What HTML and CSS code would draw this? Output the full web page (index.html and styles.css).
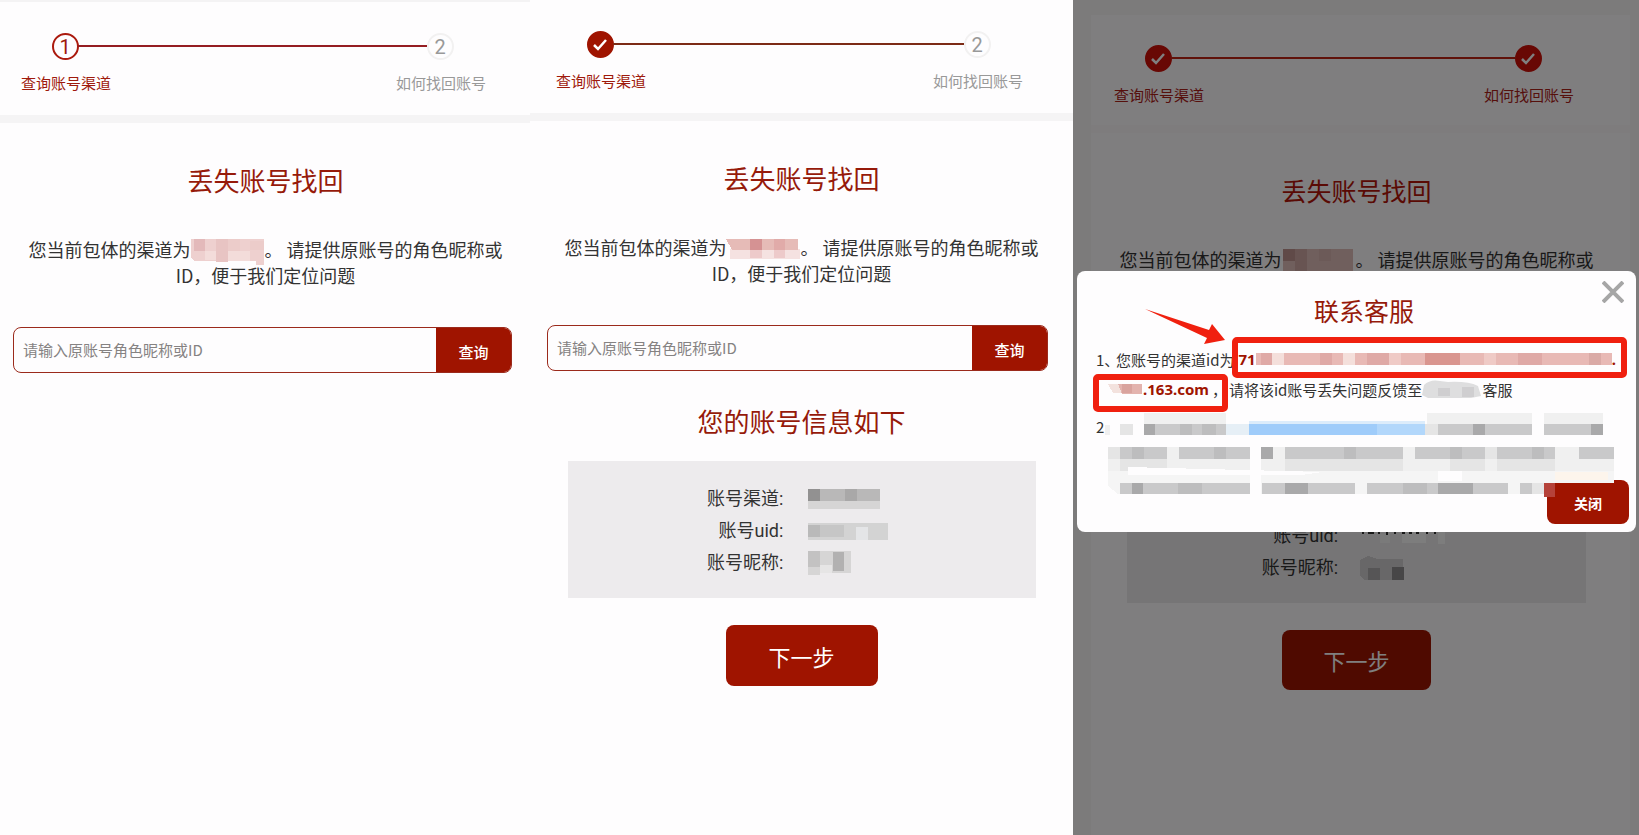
FILE: index.html
```html
<!DOCTYPE html>
<html lang="zh-CN">
<head>
  <meta charset="UTF-8">
  <meta name="viewport" content="width=device-width, initial-scale=1.0">
  <title>丢失账号找回</title>
  <link rel="stylesheet" href="styles.css">
</head>
<body>
<div class="flow">

  <!-- Step 1: ask for the account -->
  <section class="panel panel-query">
    <header class="steps">
      <div class="step active">
        <span class="dot">1</span>
        <span class="step-label">查询账号渠道</span>
      </div>
      <div class="line"></div>
      <div class="step">
        <span class="dot">2</span>
        <span class="step-label">如何找回账号</span>
      </div>
    </header>
    <div class="content">
      <h1 class="title">丢失账号找回</h1>
      <p class="intro">您当前包体的渠道为<svg class="mask" width="74" height="26" viewBox="0 0 74 26" shape-rendering="crispEdges"><path fill="#eed0cf" d="M1 0h73v26h-8v-4H4l-3-3z"/><path fill="#e3b9ba" d="M4 0h11v12H4z"/><path fill="#e8c4c3" d="M26 0h12v23H26z"/><path fill="#ecccca" d="M38 0h12v12H38zM60 2h14v9H60z"/><path fill="#f3dcda" d="M15 12h11v9H15zM38 12h22v10H38z"/></svg>。 请提供原账号的角色昵称或<br>ID，便于我们定位问题</p>
      <form class="search">
        <input type="text" placeholder="请输入原账号角色昵称或ID" aria-label="原账号角色昵称或ID">
        <button type="button">查询</button>
      </form>
    </div>
  </section>

  <!-- Step 1 done: account info found -->
  <section class="panel panel-result">
    <header class="steps">
      <div class="step done">
        <span class="dot"><svg width="16" height="14" viewBox="0 0 16 14"><path d="M2 7l4 4 8-9" fill="none" stroke="#fff" stroke-width="2.5"/></svg></span>
        <span class="step-label">查询账号渠道</span>
      </div>
      <div class="line"></div>
      <div class="step">
        <span class="dot">2</span>
        <span class="step-label">如何找回账号</span>
      </div>
    </header>
    <div class="content">
      <h1 class="title">丢失账号找回</h1>
      <p class="intro">您当前包体的渠道为<svg class="mask" width="74" height="26" viewBox="0 0 74 26" shape-rendering="crispEdges"><path fill="#f5e2e1" d="M4 12h70v10H4z"/><path fill="#e6bbb7" d="M0 2h72v11H6z"/><path fill="#d59293" d="M24 2h12v11H24z"/><path fill="#e1aba9" d="M48 2h11v11H48z"/><path fill="#edcaca" d="M24 13h12v8H24zM48 13h11v8H48z"/></svg>。 请提供原账号的角色昵称或<br>ID，便于我们定位问题</p>
      <form class="search">
        <input type="text" placeholder="请输入原账号角色昵称或ID" aria-label="原账号角色昵称或ID">
        <button type="button">查询</button>
      </form>
      <h2 class="title result-title">您的账号信息如下</h2>
      <dl class="info">
        <dt>账号渠道:</dt>
        <dd><svg width="74" height="22" viewBox="0 0 74 22" shape-rendering="crispEdges"><path fill="#d6d5d5" d="M0 12h72v9H0z"/><path fill="#b9b8b8" d="M0 1h72v12H0z"/><path fill="#929191" d="M0 1h12v12H0z"/><path fill="#a9a8a8" d="M37 1h12v12H37z"/></svg></dd>
        <dt>账号uid:</dt>
        <dd><svg width="80" height="18" viewBox="0 0 80 18" shape-rendering="crispEdges"><path fill="#d3d3d3" d="M0 1h80v17H0z"/><path fill="#b9b9b9" d="M0 3h12v12H0z"/><path fill="#c6c6c6" d="M12 3h24v12H12z"/><path fill="#e4e5e7" d="M48 5h12v13H48z"/></svg></dd>
        <dt>账号昵称:</dt>
        <dd><svg width="44" height="24" viewBox="0 0 44 24" shape-rendering="crispEdges"><path fill="#d6d5d5" d="M0 0h43v22H12v2H0z"/><path fill="#c3c2c2" d="M0 0h12v16H0z"/><path fill="#b2b1b1" d="M25 1h11v19H25z"/><path fill="#e6e5e5" d="M12 14h12v8H12z"/></svg></dd>
      </dl>
      <button type="button" class="next">下一步</button>
    </div>
  </section>

  <!-- Step 2: contact dialog -->
  <section class="panel panel-contact">
    <div class="card">
      <header class="steps">
        <div class="step done">
          <span class="dot"><svg width="16" height="14" viewBox="0 0 16 14"><path d="M2 7l4 4 8-9" fill="none" stroke="#fff" stroke-width="2.5"/></svg></span>
          <span class="step-label">查询账号渠道</span>
        </div>
        <div class="line"></div>
        <div class="step done">
          <span class="dot"><svg width="16" height="14" viewBox="0 0 16 14"><path d="M2 7l4 4 8-9" fill="none" stroke="#fff" stroke-width="2.5"/></svg></span>
          <span class="step-label">如何找回账号</span>
        </div>
      </header>
      <div class="content">
        <h1 class="title">丢失账号找回</h1>
        <p class="intro">您当前包体的渠道为<svg class="mask" width="74" height="26" viewBox="0 0 74 26" shape-rendering="crispEdges"><path fill="#e0bfbb" d="M2 0h70v26H2z"/><path fill="#c09490" d="M2 0h12v12H2z"/><path fill="#d0a8a4" d="M14 0h12v24H14z"/><path fill="#d8b5b1" d="M38 0h12v12H38z"/></svg>。 请提供原账号的角色昵称或<br>ID，便于我们定位问题</p>
        <form class="search">
          <input type="text" placeholder="请输入原账号角色昵称或ID" aria-label="原账号角色昵称或ID">
          <button type="button">查询</button>
        </form>
        <h2 class="title result-title">您的账号信息如下</h2>
        <dl class="info">
          <dt>账号渠道:</dt>
          <dd></dd>
          <dt>账号uid:</dt>
          <dd><svg width="86" height="20" viewBox="0 0 86 20" shape-rendering="crispEdges"><path fill="#fafafa" d="M42 6h24v11H42zM78 6h7v12h-7z"/><path fill="#f4f4f4" d="M20 8h10v9H20z"/><path fill="#333" d="M2 5h2v3H2zM8 6h6v2H8zM18 5h2v3h-2zM26 5h2v4h-2zM34 5h2v3h-2zM42 6h3v2h-3zM49 6h3v2h-3zM56 6h3v2h-3zM66 5h2v3h-2zM74 5h2v3h-2z"/></svg></dd>
          <dt>账号昵称:</dt>
          <dd><svg width="44" height="24" viewBox="0 0 44 24" shape-rendering="crispEdges"><path fill="#d0cfd0" d="M0 4l8-4 10 3h25v21H4l-4-4z"/><path fill="#acabac" d="M8 12h12v12H8z"/><path fill="#8e8c8f" d="M32 11h12v13H32z"/></svg></dd>
        </dl>
        <button type="button" class="next">下一步</button>
      </div>
    </div>
    <div class="overlay"></div>

    <div class="modal" role="dialog" aria-labelledby="modal-title">
      <h2 class="title" id="modal-title">联系客服</h2>
      <button type="button" class="modal-x" aria-label="关闭窗口">
        <svg width="22" height="22" viewBox="0 0 22 22"><path d="M1 1l20 20M21 1L1 21" stroke="#a6a6a6" stroke-width="4"/></svg>
      </button>
      <svg class="arrow" width="80" height="35" viewBox="0 0 80 35"><path fill="#f0200f" d="M0 0L64 21 67 15 80 31 59 35 62 29z"/></svg>
      <div class="tips">
        <div class="row">
          <span class="num">1、</span>
          <span>您账号的渠道id为</span>
          <strong class="callout channel-id">71<svg height="14" viewBox="0 0 356 14" preserveAspectRatio="none" shape-rendering="crispEdges"><path fill="#e8b9b5" d="M0 1h356v12H0z"/><path fill="#f4dfdb" d="M16 1h12v12H16zM87 1h12v12H87z"/><path fill="#dfa9a6" d="M5 1h11v12H5zM64 1h12v12H64zM111 1h22v12h-22zM262 1h24v12h-24z"/><path fill="#d9958f" d="M169 1h35v12h-35z"/><path fill="#efcac6" d="M228 1h12v12h-12zM133 1h12v12h-12z"/><path fill="#daaaa6" d="M333 1h12v12h-12z"/></svg>.</strong>
        </div>
        <div class="row row-cont">
          <strong class="callout"><svg width="35" height="12" viewBox="0 0 35 12" shape-rendering="crispEdges"><path fill="#f3e2de" d="M0 1h14v9H5z"/><path fill="#e3b3ae" d="M10 1h24v10H14z"/><path fill="#d9a39e" d="M14 1h10v9H14z"/></svg>.163.com<i>，</i></strong>
          <span>请将该id账号丢失问题反馈至</span>
          <svg width="60" height="20" viewBox="0 0 60 20"><path fill="#dededf" d="M2 6Q8 0 18 2l8 1q20-1 30 4l3 10-10 2H6L0 16z"/><path fill="#cfced0" d="M16 9h12v8H16zM40 8h12v10H40z"/></svg>
          <span>客服</span>
        </div>
        <div class="row row-second">
          <span class="num-2">2</span>
          <svg class="block-mask" height="82" viewBox="0 0 518 82" preserveAspectRatio="none" shape-rendering="crispEdges">
            <path fill="#f0f0f0" d="M40 0h82v11H40zM323 0h105v11H323zM440 0h59v11h-59zM1 12h5v10H1zM4 34h506v24H4z"/>
            <path fill="#f5f5f5" d="M4 58h506v12H4zM4 70h436v11H14L4 73z"/>
            <path fill="#e5e5e5" d="M16 11h13v11H16zM321 11h13v11h-13zM4 34h12v12H4zM381 34h12v12h-12zM428 70h12v11h-12zM16 46h47v12H16zM181 46h118v12H181zM346 46h35v12h-35zM393 46h58v12h-58z"/>
            <path fill="#e6eff6" d="M122 11h23v11h-23z"/>
            <path fill="#9fccfa" d="M145 11h128v11H145z"/>
            <path fill="#b2d7fb" d="M273 11h48v11h-48z"/>
            <path fill="#dcecfb" d="M145 8h176v3H145z"/>
            <path fill="#c9c9ca" d="M51 11h71v11H51zM334 11h94v11h-94zM440 11h47v11h-47zM16 34h47v12H16zM75 34h71v12H75zM181 34h118v12H181zM311 34h70v12h-70zM393 34h58v12h-58zM475 34h35v12h-35zM16 70h130v11H16zM158 70h93v11h-93zM263 70h141v11H263zM416 70h12v11h-12z"/>
            <path fill="#bdbdbe" d="M76 11h12v11H76zM98 11h14v11H98zM28 34h12v12H28zM110 34h12v12h-12zM240 34h12v12h-12zM346 34h12v12h-12zM428 34h12v12h-12zM74 70h24v11H74zM299 70h24v11h-24z"/>
            <path fill="#a9a9aa" d="M40 11h11v11H40zM369 11h12v11h-12zM487 11h12v11h-12zM157 34h12v12h-12zM28 70h11v11H28zM181 70h23v11h-23zM334 70h35v11h-35z"/>
            <path fill="#fefdfe" d="M122 11zM146 34h11v48h-11zM24 54l194 5-20 3H24zM334 58h24v10h-24z"/>
            <path fill="#fdf5ec" d="M451 59h53v8h-53z"/>
            <path fill="#b5423a" d="M440 70h11v14h-11z"/>
          </svg>
        </div>
      </div>
      <button type="button" class="modal-close">关闭</button>
    </div>
  </section>

</div>
</body>
</html>
```
FILE: styles.css
```css
* {
  box-sizing: border-box;
}
body {
  margin: 0;
  font-family: "Noto Sans CJK SC", "Noto Sans", sans-serif;
  color: #333;
  background: #fefdfe;
}
button, input {
  font-family: inherit;
}
.flow {
  display: grid;
  grid-template-columns: 530fr 543fr 566fr;
  min-height: 100vh;
}
.panel {
  position: relative;
}

/* steps */
.steps {
  display: flex;
  align-items: flex-start;
  border-bottom: 8px solid #f5f4f5;
}
.panel-query .steps {
  border-top: 2px solid #f4f3f4;
  padding: 31px 44px 22px 21px;
}
.panel-result .steps {
  padding: 31px 50px 22px 26px;
}
.step {
  display: flex;
  flex-direction: column;
  align-items: center;
  width: 90px;
  gap: 13px;
  color: #999;
}
.dot {
  display: flex;
  align-items: center;
  justify-content: center;
  width: 27px;
  height: 27px;
  margin-right: 2px;
  border: 2px solid #f2f1f1;
  border-radius: 50%;
  font-family: Roboto, "Liberation Sans", sans-serif;
  font-size: 20px;
  line-height: 24px;
}
.step-label {
  font-size: 15px;
  line-height: 20px;
  white-space: nowrap;
}
.step.active, .step.done {
  color: #9f1a0c;
}
.step.active .dot {
  border-color: #ab1a0e;
}
.step.done .dot {
  background: #9f1400;
  border-color: #9f1400;
}
.line {
  flex: 1;
  height: 2px;
  margin: 12px -31px 0 -33px;
  background: #951d22;
}
.panel-result .line {
  background: #7c2b16;
}

/* page content */
.content {
  display: flex;
  flex-direction: column;
}
.panel-query .content {
  padding: 0 18px 0 13px;
}
.panel-result .content {
  padding: 0 25px 0 17px;
}
.title {
  margin: 39px 0 0;
  font-size: 26px;
  font-weight: 400;
  line-height: 36px;
  text-align: center;
  color: #961a0a;
}
.intro {
  margin: 38px -10px 0;
  font-size: 18px;
  line-height: 26px;
  text-align: center;
}
.panel-query .title, .panel-query .intro {
  padding-left: 6px;
}
.panel-result .title, .panel-result .intro {
  padding-left: 8px;
}
.mask {
  height: 26px;
  vertical-align: middle;
  margin: -4px 0;
}
.search {
  display: flex;
  margin-top: 39px;
  height: 46px;
  border: 1px solid #9b2a1c;
  border-radius: 8px;
  overflow: hidden;
}
.search input {
  flex: 1;
  min-width: 0;
  padding: 0 9px 2px;
  border: 0;
  background: transparent;
  font-size: 15px;
  color: #333;
}
.search input::placeholder {
  color: #858282;
}
.search button {
  width: 75px;
  padding: 2px 0 0;
  border: 0;
  background: #9f1400;
  color: #fff;
  font-size: 15px;
  font-weight: 500;
}
.result-title {
  margin-top: 32px;
}
.info {
  display: grid;
  grid-template-columns: 46% 1fr;
  column-gap: 25px;
  grid-auto-rows: 32px;
  align-items: center;
  margin: 22px 12px 0 21px;
  padding: 22px 0 19px;
  background: #edebed;
  font-family: Roboto, "Noto Sans CJK SC", sans-serif;
  font-size: 18px;
  line-height: 32px;
}
.info dt {
  text-align: right;
}
.info dd {
  display: flex;
  margin: 0;
}
.next {
  align-self: center;
  width: 152px;
  height: 61px;
  margin: 27px 0 0 8px;
  border: 0;
  border-radius: 8px;
  background: #9f1400;
  color: #fff;
  font-size: 22px;
}

/* dimmed page behind the dialog */
.panel-contact {
  padding: 15px 9px 0 18px;
  background: #f8f7f7;
}
.card {
  min-height: 100%;
  padding-right: 8px;
  background: #fffcfe;
}
.panel-contact .steps {
  margin-right: -8px;
  padding: 30px 56px 20px 23px;
  border-color: #fcf9fb;
}
.panel-contact .step {
  color: #ac2018;
}
.panel-contact .step.done .dot {
  background: #d01008;
  border-color: #d01008;
}
.panel-contact .line {
  background: #c02414;
}
.panel-contact .card .title {
  font-size: 25px;
  color: #b41408;
}
.panel-contact .result-title {
  margin-top: 26px;
}
.panel-contact .info {
  margin: 21px 36px 0;
  column-gap: 22px;
}
.panel-contact .next {
  width: 149px;
  height: 60px;
  margin-left: 0;
}
.overlay {
  position: absolute;
  inset: 0;
  background: rgba(0, 0, 0, 0.5);
}

/* dialog */
.modal {
  position: absolute;
  top: 271px;
  left: 4px;
  right: 3px;
  padding: 21px 4px 37px 19px;
  border-radius: 8px;
  background: #fefdfe;
}
.modal .title {
  margin: 0;
  font-size: 25px;
}
.modal-x {
  position: absolute;
  top: 10px;
  right: 12px;
  display: flex;
  padding: 0;
  border: 0;
  background: none;
}
.arrow {
  position: absolute;
  top: 38px;
  left: 68px;
}
.tips {
  margin-top: 16px;
  font-size: 15px;
}
.row {
  display: flex;
  align-items: center;
  height: 30px;
  white-space: nowrap;
}
.row-cont {
  padding-left: 12px;
}
.num {
  width: 20px;
  font-feature-settings: "halt";
}
.callout {
  position: relative;
  display: flex;
  align-items: center;
  font-family: "Noto Sans", "Noto Sans CJK SC", sans-serif;
  color: #9f1400;
}
.callout i {
  font-style: normal;
  font-weight: 400;
  color: #333;
  margin: 0 2px 0 3px;
}
.callout::after {
  content: "";
  position: absolute;
  inset: -5px 1px -12px -15px;
  border: 6px solid #f0200f;
  border-radius: 5px;
}
.channel-id {
  flex: 1;
  margin: 0 16px 0 4px;
}
.channel-id svg {
  flex: 1;
  min-width: 0;
}
.channel-id::after {
  inset: -12px -11px -9px -6px;
}
.row-second {
  align-items: flex-start;
  height: auto;
  margin-top: 9px;
}
.num-2 {
  width: 8px;
  line-height: 28px;
}
.block-mask {
  position: relative;
  z-index: 1;
  flex: 1;
  margin-right: 10px;
  overflow: visible;
  pointer-events: none;
}
.modal-close {
  position: absolute;
  right: 7px;
  bottom: 8px;
  width: 82px;
  height: 44px;
  padding: 2px 0 0;
  border: 0;
  border-radius: 8px;
  background: #9f1400;
  color: #fff;
  font-size: 14px;
  font-weight: 700;
}
```
